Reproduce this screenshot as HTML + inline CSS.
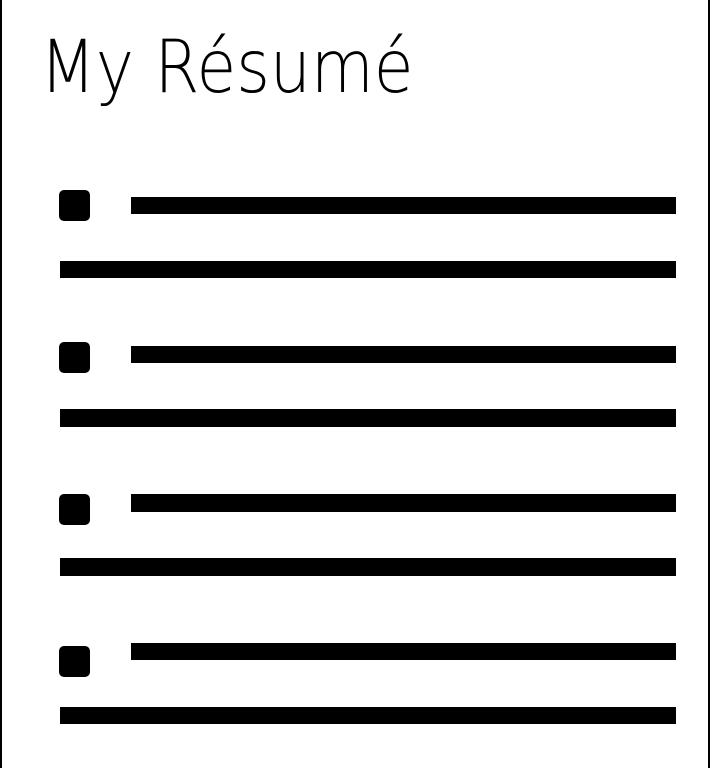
<!DOCTYPE html>
<html><head><meta charset="utf-8"><style>
html,body{margin:0;padding:0;background:#fff;width:711px;height:768px;overflow:hidden;position:relative}
.bl{position:absolute;top:0;bottom:0;width:2px;background:#000}
.r{position:absolute;background:#000}
.b{position:absolute;left:59px;width:31px;height:31px;background:#000;border-radius:5px}
.t{position:absolute;left:40px;top:31px;font-family:"DejaVu Sans","Liberation Sans",sans-serif;font-weight:200;font-size:73px;line-height:73px;transform:scaleX(0.885);transform-origin:0 0;white-space:nowrap;color:#000}
</style></head><body>
<div class="bl" style="left:0"></div>
<div class="bl" style="left:708px"></div>
<div class="t">My Résumé</div>
<div class="b" style="top:190px"></div>
<div class="r" style="left:131px;width:545px;top:197px;height:17px"></div>
<div class="r" style="left:60px;width:616px;top:261px;height:17px"></div>
<div class="b" style="top:342px"></div>
<div class="r" style="left:131px;width:545px;top:346px;height:17px"></div>
<div class="r" style="left:60px;width:616px;top:409px;height:18px"></div>
<div class="b" style="top:494px"></div>
<div class="r" style="left:131px;width:545px;top:494px;height:18px"></div>
<div class="r" style="left:60px;width:616px;top:558px;height:18px"></div>
<div class="b" style="top:646px"></div>
<div class="r" style="left:131px;width:545px;top:643px;height:17px"></div>
<div class="r" style="left:60px;width:616px;top:707px;height:17px"></div>
</body></html>
